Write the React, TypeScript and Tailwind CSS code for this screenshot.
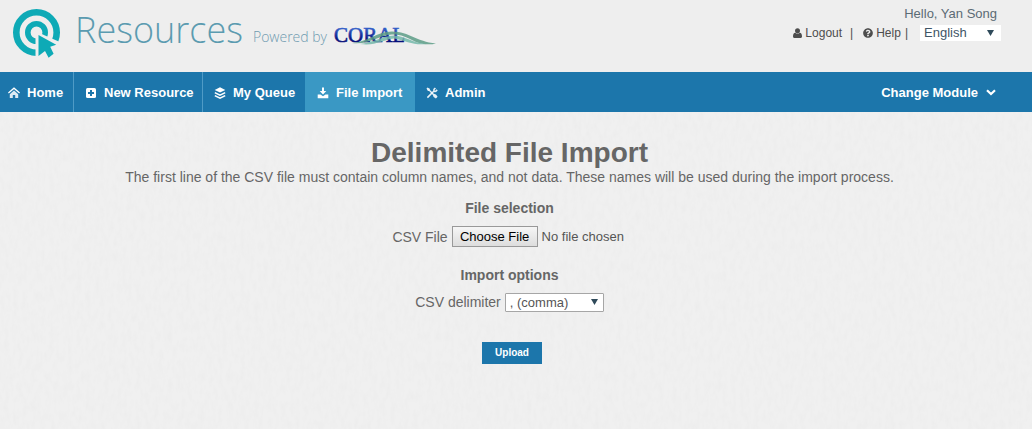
import React from "react";
import { FaQuestionCircle } from "react-icons/fa";

const LogoIcon = () => (
  <svg viewBox="0 0 48 50" className="h-[50px] w-12 shrink-0" aria-hidden="true">
    <circle cx="23.5" cy="23.5" r="20.2" fill="none" stroke="#0eaab6" strokeWidth="6.6" />
    <circle cx="23.5" cy="23.5" r="8.7" fill="none" stroke="#0eaab6" strokeWidth="5.6" />
    <path d="M22.5 22L32 26.500L48 33.500L48 50H22.5Z" fill="#eeeeee" />
    <path d="M25.5 26L43.200 35.800L37.200 37.800L40.600 44.800L35.600 48.800L32 42L25.500 47Z" fill="#0eaab6" />
  </svg>
);

const CoralLogo = () => (
  <svg viewBox="0 0 104 26" className="h-[26px] w-[104px] shrink-0" role="img" aria-label="CORAL">
    <defs>
      <linearGradient id="ink" x1="0" y1="0" x2="0" y2="1">
        <stop offset="0.25" stopColor="#2f5cc6" />
        <stop offset="0.7" stopColor="#04107c" />
      </linearGradient>
    </defs>
    <text x="0" y="18" fontSize="21" fill="url(#ink)" stroke="url(#ink)" strokeWidth="0.6" style={{ fontFamily: '"Liberation Serif", serif' }}>
      CORAL
    </text>
    <path d="M18 19C34 18 42 8 58 7.500C76 8 82 17.500 102 19.500C96 21 88 20.500 82 18C72 13 68 10.500 58 10.500C45 11 36 21 18 19Z" fill="#5c9c86" fillOpacity="0.85" />
    <path d="M26 20C40 18.500 48 12 60 11.500C72 12 78 19 92 20C80 21.500 72 17 60 14.500C48 16 42 22 26 20Z" fill="#74b8aa" fillOpacity="0.85" />
  </svg>
);

const UserIcon = () => (
  <svg viewBox="0 0 9 10" className="h-[10px] w-[9px]" aria-hidden="true">
    <circle cx="4.500" cy="2.700" r="2.500" fill="#4d4d4d" />
    <path d="M0 8.500C0 6 .8 4.800 2.200 4.700C3.500 5.900 5.500 5.900 6.800 4.700C8.200 4.800 9 6 9 8.500C9 9.400 8.400 10 7.500 10H1.500C.6 10 0 9.400 0 8.500Z" fill="#4d4d4d" />
  </svg>
);

const HomeIcon = () => (
  <svg viewBox="0 0 12 12" className="size-3" aria-hidden="true">
    <path d="M.4 6L6 1.200L11.600 6" fill="none" stroke="#fff" strokeWidth="1.300" />
    <path d="M1.800 7.200L6 3.600L10.200 7.200V11H7.200V8H4.800V11H1.800Z" fill="#fff" fillOpacity="0.85" />
  </svg>
);

const PlusIcon = () => (
  <svg viewBox="0 0 12 12" className="size-3" aria-hidden="true">
    <rect x="1" y="1" width="10" height="10" rx="1.500" fill="#fff" />
    <path d="M6 3V9M3 6H9" stroke="#1c76ab" strokeWidth="2" />
  </svg>
);

const StackIcon = () => (
  <svg viewBox="0 0 12 12" className="size-3" aria-hidden="true">
    <path d="M6 .3L11.300 2.900L6 5.500L.7 2.900Z" fill="#fff" />
    <path d="M.8 5.600L6 8.100L11.200 5.600M.8 8.600L6 11.100L11.200 8.600" fill="none" stroke="#fff" strokeWidth="1.500" />
  </svg>
);

const DownloadIcon = () => (
  <svg viewBox="0 0 12 12" className="size-3" aria-hidden="true">
    <path d="M5 .5H7V4H9.300L6 7.600L2.700 4H5Z" fill="#fff" />
    <path d="M.7 7.500H3.500L6 9.300L8.500 7.500H11.300V11.300H.7Z" fill="#fff" />
  </svg>
);

const ToolsIcon = () => (
  <svg viewBox="0 0 12 12" className="size-3" aria-hidden="true">
    <path d="M.5 1.500L1.500 .5L3.800 1.800L4 3L6.300 5.300L7.800 6.800L10 7.400L11.600 9.800L9.900 11.600L7.600 10L6.900 7.900L3.100 4.100L1.900 3.900Z" fill="#fff" fillOpacity="0.9" />
    <path d="M1.400 10.600L8.200 3.800M7.800 2.600L9.400 1M9.400 4.600L11.200 2.900M7.900 2.500C7.600 3.600 8.300 4.500 9.500 4.500" fill="none" stroke="#fff" strokeOpacity="0.9" strokeWidth="1.500" />
  </svg>
);

const Caret = ({ className }: { className: string }) => (
  <svg viewBox="0 0 7 6" className={`pointer-events-none absolute h-[6px] w-[7px] ${className}`} aria-hidden="true">
    <path d="M0 0H7L3.500 6Z" fill="#2f4a5a" />
  </svg>
);

const items = [
  { label: "Home", Icon: HomeIcon, style: "w-[74px] border-r border-[#4f9bc6] bg-[#1c76ab]" },
  { label: "New Resource", Icon: PlusIcon, style: "w-[129px] border-r border-[#4f9bc6] bg-[#1c76ab] pl-[11px]" },
  { label: "My Queue", Icon: StackIcon, style: "w-[102px] bg-[#1c76ab] pl-[11px]" },
  { label: "File Import", Icon: DownloadIcon, style: "w-[110px] bg-[#3a98c4] pl-3" },
  { label: "Admin", Icon: ToolsIcon, style: "bg-[#1c76ab] pl-[11px]" },
];

const Paper = () => (
  <svg className="absolute inset-0 size-full" aria-hidden="true">
    <filter id="paper" x="0" y="0" width="100%" height="100%">
      <feTurbulence type="fractalNoise" baseFrequency="0.22 0.1" numOctaves="3" seed="4" />
      <feColorMatrix values="0 0 0 0 0.5  0 0 0 0 0.5  0 0 0 0 0.5  0.12 0 0 0 -0.045" />
    </filter>
    <rect width="100%" height="100%" filter="url(#paper)" />
  </svg>
);

export default function App() {
  return (
    <div className="flex min-h-screen flex-col bg-[#f0f0f0] font-['Liberation_Sans',Arial,sans-serif] text-sm text-[#666]">
      <header className="flex h-[72px] items-start justify-between bg-[#eee] pr-[31px] pl-[13px]">
        <div className="flex items-start pt-[9px] font-['Open_Sans',sans-serif] font-light">
          <LogoIcon />
          <h1 className="ml-[14px] text-[36px] leading-[42px] text-[#5b9bb0]">Resources</h1>
          <span className="mt-[18px] ml-[10px] text-sm leading-5 text-[#6f9bb0]">Powered by</span>
          <span className="mt-[15px] ml-[7px]"><CoralLogo /></span>
        </div>
        <div className="flex flex-col items-end pt-[5px]">
          <p className="mr-1 text-[13px] leading-[18px] text-[#5b6b75]">Hello, Yan Song</p>
          <div className="mt-[2px] flex items-center text-xs leading-4 text-[#4d4d4d]">
            <a href="#logout" className="flex items-center gap-[3px]"><UserIcon />Logout</a>
            <span className="mr-[10px] ml-2">|</span>
            <a href="#help" className="flex items-center gap-[3px]"><FaQuestionCircle className="size-[10px]" />Help</a>
            <span className="mr-3 ml-1">|</span>
            <span className="relative">
              <select aria-label="Language" className="block h-4 w-[81px] appearance-none bg-white pl-1 text-[13px] leading-4 text-[#3f5566]">
                <option>English</option>
              </select>
              <Caret className="top-[5px] right-[7px]" />
            </span>
          </div>
        </div>
      </header>

      <nav className="flex h-10 items-stretch bg-[#1c76ab] text-[13px] leading-5 font-bold text-white">
        {items.map(({ label, Icon, style }) => (
          <a key={label} href="#nav" className={`flex items-center gap-[7px] pt-px pl-2 whitespace-nowrap ${style}`}>
            <Icon />
            {label}
          </a>
        ))}
        <button type="button" className="mr-9 ml-auto flex items-center gap-2 pt-px font-bold">
          Change Module
          <svg viewBox="0 0 10 7" className="h-[7px] w-[10px]" aria-hidden="true">
            <path d="M1 1.200L5 5L9 1.200" fill="none" stroke="#fff" strokeWidth="2.200" />
          </svg>
        </button>
      </nav>

      <main className="relative grow">
        <Paper />
        <form className="relative flex flex-col items-center pt-[26px] pr-[13px] pb-8" onSubmit={(e) => e.preventDefault()}>
          <h2 className="text-[28px] leading-[30px] font-bold">Delimited File Import</h2>
          <p className="leading-[18px] text-center">
            The first line of the CSV file must contain column names, and not data. These names will be used during the import process.
          </p>
          <h3 className="mt-[13px] leading-[18px] font-bold">File selection</h3>
          <div className="mt-[9px] flex items-center gap-1">
            <label htmlFor="csv">CSV File</label>
            <input
              id="csv"
              type="file"
              className="w-[175px] text-[13px] leading-[17px] text-[#555] file:mr-1 file:h-[21px] file:w-[86px] file:border file:border-solid file:border-[#999] file:bg-linear-to-b file:from-[#f6f6f6] file:to-[#ddd] file:p-0 file:text-[13px] file:text-black"
            />
          </div>
          <h3 className="mt-[19px] leading-[18px] font-bold">Import options</h3>
          <div className="mt-2 flex items-center gap-1">
            <label htmlFor="delimiter">CSV delimiter</label>
            <span className="relative">
              <select id="delimiter" className="block h-[19px] w-[99px] appearance-none rounded-[1px] border border-[#a6a6a6] bg-white pl-1 text-[13px] leading-[17px] text-[#555]">
                <option>, (comma)</option>
              </select>
              <Caret className="top-[6px] right-[6px]" />
            </span>
          </div>
          <button type="submit" className="mt-[30px] ml-[5px] h-[22px] w-[60px] bg-[#1c76ab] text-[10px] font-bold text-white">
            Upload
          </button>
        </form>
      </main>
    </div>
  );
}
